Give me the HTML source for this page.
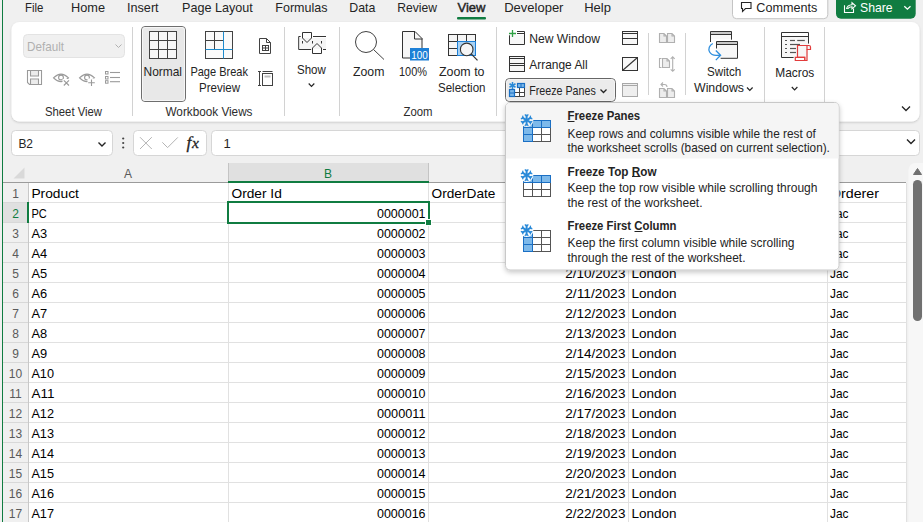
<!DOCTYPE html>
<html><head><meta charset="utf-8"><title>Excel - Freeze Panes</title>
<style>html,body{margin:0;padding:0;background:#f0f0f0;overflow:hidden;width:923px;height:522px}svg{display:block;font-family:"Liberation Sans",sans-serif}</style></head>
<body><svg width="923" height="522" viewBox="0 0 923 522" font-family="Liberation Sans, sans-serif" shape-rendering="auto"><rect x="0" y="0" width="923" height="522" fill="#f0f0f0" />
<text x="25" y="12" font-size="13" fill="#242424" textLength="18.4" lengthAdjust="spacingAndGlyphs" >File</text>
<text x="71" y="12" font-size="13" fill="#242424" textLength="34" lengthAdjust="spacingAndGlyphs" >Home</text>
<text x="127" y="12" font-size="13" fill="#242424" textLength="31.6" lengthAdjust="spacingAndGlyphs" >Insert</text>
<text x="182" y="12" font-size="13" fill="#242424" textLength="70.8" lengthAdjust="spacingAndGlyphs" >Page Layout</text>
<text x="275.3" y="12" font-size="13" fill="#242424" textLength="52.1" lengthAdjust="spacingAndGlyphs" >Formulas</text>
<text x="349.3" y="12" font-size="13" fill="#242424" textLength="26.1" lengthAdjust="spacingAndGlyphs" >Data</text>
<text x="397.3" y="12" font-size="13" fill="#242424" textLength="39.7" lengthAdjust="spacingAndGlyphs" >Review</text>
<text x="457.5" y="12" font-size="13" fill="#242424" stroke="#242424" stroke-width="0.45">View</text>
<text x="504.2" y="12" font-size="13" fill="#242424" >Developer</text>
<text x="584.2" y="12" font-size="13" fill="#242424" >Help</text>
<rect x="457" y="17" width="29" height="2.5" fill="#107c41" rx="1" />
<rect x="732.5" y="-6" width="95.3" height="24.7" fill="#ffffff" stroke="#c4c4c4" stroke-width="1" rx="4" />
<path d="M741.5 2.5 h9.5 v6 h-5.5 l-3 3 v-3 h-1 z" fill="none" stroke="#242424" stroke-width="1.1" />
<text x="756.3" y="12" font-size="13" fill="#242424" textLength="61" lengthAdjust="spacingAndGlyphs" >Comments</text>
<rect x="836" y="-6" width="79.7" height="24.8" fill="#107c41" rx="5" />
<path d="M844.5 5.2 v7.3 h9 v-4" fill="none" stroke="#ffffff" stroke-width="1.1" />
<path d="M846.5 9 c0.5-2.5 2.5-4 5.5-4.2 v-2 l3.5 3 -3.5 3 v-2 c-2 0-3.5 0.8-4.5 2.2" fill="none" stroke="#ffffff" stroke-width="1.1" />
<text x="860" y="12" font-size="13" fill="#ffffff" textLength="32.6" lengthAdjust="spacingAndGlyphs" >Share</text>
<path d="M904.3 6.2 l3.1 3 3.1-3" fill="none" stroke="#ffffff" stroke-width="1.3" />
<defs><filter id="sh" x="-5%" y="-20%" width="110%" height="150%"><feDropShadow dx="0" dy="1" stdDeviation="1" flood-color="#000" flood-opacity="0.18"/></filter><filter id="sh2" x="-10%" y="-10%" width="120%" height="125%"><feDropShadow dx="0" dy="2" stdDeviation="2.5" flood-color="#000" flood-opacity="0.22"/></filter></defs>
<rect x="11.5" y="22" width="908" height="99.5" fill="#ffffff" rx="8" filter="url(#sh)"/>
<line x1="132.5" y1="27" x2="132.5" y2="116" stroke="#d2d2d2" stroke-width="1" />
<line x1="284.5" y1="27" x2="284.5" y2="116" stroke="#d2d2d2" stroke-width="1" />
<line x1="339.5" y1="27" x2="339.5" y2="116" stroke="#d2d2d2" stroke-width="1" />
<line x1="496.5" y1="27" x2="496.5" y2="116" stroke="#d2d2d2" stroke-width="1" />
<line x1="764.5" y1="27" x2="764.5" y2="116" stroke="#d2d2d2" stroke-width="1" />
<line x1="824.5" y1="27" x2="824.5" y2="116" stroke="#d2d2d2" stroke-width="1" />
<line x1="648.5" y1="33" x2="648.5" y2="95" stroke="#d2d2d2" stroke-width="1" />
<line x1="685.5" y1="33" x2="685.5" y2="95" stroke="#d2d2d2" stroke-width="1" />
<rect x="23.5" y="34.5" width="101" height="23" fill="#f0f0f0" stroke="#e3e3e3" stroke-width="1" rx="4" />
<text x="27" y="50.5" font-size="13" fill="#b0b0b0" textLength="37" lengthAdjust="spacingAndGlyphs" >Default</text>
<path d="M115.5 44.5 l3 3 3-3" fill="none" stroke="#b0b0b0" stroke-width="1" />
<path d="M27.5 70.5 h14 v14 h-12 l-2-2 z" fill="none" stroke="#9a9a9a" stroke-width="1.1" />
<rect x="31" y="71" width="7" height="5" fill="#ececec" />
<rect x="31" y="79.5" width="7" height="4.5" fill="#ececec" />
<path d="M30.5 70.5 v5.5 h8 v-5.5 M30.5 84.5 v-5.5 h8 v5.5" fill="none" stroke="#9a9a9a" stroke-width="1.1" />
<path d="M53.5 77.8 q7.5-7.5 15 0 q-7.5 7.5-15 0 z" fill="none" stroke="#9a9a9a" stroke-width="1.1" />
<circle cx="61" cy="77.5" r="2.4" fill="none" stroke="#9a9a9a" stroke-width="1.1"/>
<rect x="62.5" y="79" width="8" height="8" fill="#ffffff" />
<path d="M63.8 80.3 l5.2 5.2 M69 80.3 l-5.2 5.2" fill="none" stroke="#9a9a9a" stroke-width="1.1" />
<path d="M79.5 77.8 q7.5-7.5 15 0 q-7.5 7.5-15 0 z" fill="none" stroke="#9a9a9a" stroke-width="1.1" />
<circle cx="87" cy="77.5" r="2.4" fill="none" stroke="#9a9a9a" stroke-width="1.1"/>
<rect x="87.5" y="78.5" width="8" height="8" fill="#ffffff" />
<path d="M91.5 79.5 v6.5 M88.2 82.8 h6.6" fill="none" stroke="#9a9a9a" stroke-width="1.1" />
<rect x="105.5" y="71.5" width="2.5" height="2.5" fill="none" stroke="#9a9a9a" stroke-width="1" />
<line x1="110" y1="72.5" x2="120" y2="72.5" stroke="#9a9a9a" stroke-width="1.1" />
<rect x="105.5" y="76.5" width="2.5" height="2.5" fill="none" stroke="#9a9a9a" stroke-width="1" />
<line x1="110" y1="77.5" x2="120" y2="77.5" stroke="#9a9a9a" stroke-width="1.1" />
<rect x="105.5" y="80.7" width="2.5" height="2.5" fill="none" stroke="#9a9a9a" stroke-width="1" />
<line x1="110" y1="81.7" x2="120" y2="81.7" stroke="#9a9a9a" stroke-width="1.1" />
<text x="45" y="116" font-size="12" fill="#2c2c2c" textLength="57" lengthAdjust="spacingAndGlyphs" >Sheet View</text>
<rect x="141.5" y="26.5" width="44" height="75" fill="#e8e8e8" stroke="#6e6e6e" stroke-width="1" rx="3.5" />
<rect x="142.5" y="27.5" width="42" height="73" fill="none" stroke="#f6f6f6" stroke-width="1" rx="2.5" />
<rect x="149.5" y="31.5" width="27" height="27" fill="#f7f7f7" stroke="#424242" stroke-width="1" />
<line x1="158.5" y1="31.5" x2="158.5" y2="58.5" stroke="#424242" stroke-width="1" />
<line x1="149.5" y1="40.5" x2="176.5" y2="40.5" stroke="#424242" stroke-width="1" />
<line x1="167.5" y1="31.5" x2="167.5" y2="58.5" stroke="#424242" stroke-width="1" />
<line x1="149.5" y1="49.5" x2="176.5" y2="49.5" stroke="#424242" stroke-width="1" />
<text x="143.5" y="76" font-size="13" fill="#242424" textLength="38.5" lengthAdjust="spacingAndGlyphs" >Normal</text>
<rect x="205.5" y="31.5" width="27" height="27" fill="#fafafa" stroke="#424242" stroke-width="1" />
<line x1="214.5" y1="31.5" x2="214.5" y2="49.5" stroke="#424242" stroke-width="1" />
<line x1="205.5" y1="40.5" x2="223.5" y2="40.5" stroke="#424242" stroke-width="1" />
<line x1="223.5" y1="31.5" x2="223.5" y2="58.5" stroke="#1e8bcd" stroke-width="1" />
<line x1="205.5" y1="49.5" x2="232.5" y2="49.5" stroke="#1e8bcd" stroke-width="1" />
<text x="190.4" y="76" font-size="13" fill="#242424" textLength="57.6" lengthAdjust="spacingAndGlyphs" >Page Break</text>
<text x="199" y="91.5" font-size="13" fill="#242424" textLength="41" lengthAdjust="spacingAndGlyphs" >Preview</text>
<path d="M259.5 38.5 h7 l4 4 v11 h-11 z M266.5 38.5 v4 h4" fill="none" stroke="#424242" stroke-width="1" />
<rect x="262.5" y="45.5" width="6" height="5" fill="none" stroke="#424242" stroke-width="1" />
<line x1="265.5" y1="45.5" x2="265.5" y2="50.5" stroke="#424242" stroke-width="1" />
<line x1="262.5" y1="48" x2="268.5" y2="48" stroke="#424242" stroke-width="1" />
<path d="M258 71.5 h3 M259.5 71.5 v14 M258 85.5 h3" fill="none" stroke="#424242" stroke-width="1" />
<path d="M262.5 71.5 h10" fill="none" stroke="#424242" stroke-width="1" />
<rect x="262.5" y="73.5" width="10" height="12" fill="none" stroke="#424242" stroke-width="1" />
<rect x="264.5" y="75.5" width="6" height="2" fill="#bdbdbd" />
<text x="165.5" y="116" font-size="12" fill="#2c2c2c" textLength="87" lengthAdjust="spacingAndGlyphs" >Workbook Views</text>
<rect x="300" y="38" width="26" height="11" fill="#f5f5f5" />
<path d="M300.7 36.5 h-2 v13 h12.5 M313 36.5 h13 M323 49.5 h3 M302.5 32.5 h9 v5.5 l-4.5 4.5 -4.5-4.5 z M312.5 53.5 v-5.5 l4.5-4.5 4.5 4.5 v5.5 z" fill="none" stroke="#333333" stroke-width="1" />
<path d="M302.5 41 v2.5 M312.5 41 v2.5 M321.5 41 v2.5" fill="none" stroke="#333333" stroke-width="1" />
<text x="297" y="74.3" font-size="13" fill="#242424" textLength="28.8" lengthAdjust="spacingAndGlyphs" >Show</text>
<path d="M308.7 83.5 l2.8 2.8 2.8-2.8" fill="none" stroke="#242424" stroke-width="1.2" />
<circle cx="366" cy="42" r="10.5" fill="none" stroke="#424242" stroke-width="1"/>
<line x1="373.5" y1="49.5" x2="384" y2="59.5" stroke="#424242" stroke-width="1" />
<text x="353" y="76" font-size="13" fill="#242424" textLength="31.4" lengthAdjust="spacingAndGlyphs" >Zoom</text>
<path d="M402.5 31.5 h12.5 l7 7 v19.5 h-19.5 z" fill="#f7f7f7" stroke="#333333" stroke-width="1" />
<path d="M414.5 31.5 v7.5 h8" fill="none" stroke="#333333" stroke-width="1" />
<rect x="410" y="48" width="19" height="12.5" fill="#1c7fd6" />
<text x="419.5" y="58.6" font-size="10.5" fill="#ffffff" text-anchor="middle" textLength="16.5" lengthAdjust="spacingAndGlyphs" >100</text>
<rect x="448.5" y="34.5" width="27" height="21" fill="#f5f5f5" stroke="#333333" stroke-width="1" />
<rect x="457.5" y="41.5" width="18" height="14" fill="#a9d1f2" />
<line x1="448.5" y1="41.5" x2="475.5" y2="41.5" stroke="#333333" stroke-width="1" />
<line x1="448.5" y1="48.5" x2="457.5" y2="48.5" stroke="#333333" stroke-width="1" />
<line x1="457.5" y1="34.5" x2="457.5" y2="41.5" stroke="#333333" stroke-width="1" />
<line x1="466.5" y1="34.5" x2="466.5" y2="41.5" stroke="#333333" stroke-width="1" />
<rect x="457.5" y="41.5" width="18" height="14" fill="none" stroke="#1c7fd6" stroke-width="1" />
<circle cx="466.7" cy="49.4" r="6.3" fill="#f5f5f5" stroke="#333333" stroke-width="1.1"/>
<line x1="471.2" y1="53.9" x2="477.5" y2="60.3" stroke="#333333" stroke-width="1.2" />
<text x="399" y="76" font-size="13" fill="#242424" textLength="28" lengthAdjust="spacingAndGlyphs" >100%</text>
<text x="439" y="76" font-size="13" fill="#242424" textLength="45.5" lengthAdjust="spacingAndGlyphs" >Zoom to</text>
<text x="438" y="91.5" font-size="13" fill="#242424" textLength="47.5" lengthAdjust="spacingAndGlyphs" >Selection</text>
<text x="403.5" y="116" font-size="12" fill="#2c2c2c" textLength="29" lengthAdjust="spacingAndGlyphs" >Zoom</text>
<rect x="510" y="35" width="14" height="9" fill="#f7f7f7" />
<path d="M509.5 35.3 v9.2 h15 v-13 h-7.5 M517 33.5 h7.5" fill="none" stroke="#333333" stroke-width="1" />
<path d="M512.5 30 v7 M509 33.5 h7" fill="none" stroke="#2ea043" stroke-width="1.3" />
<text x="529.2" y="42.75" font-size="13" fill="#242424" textLength="70.8" lengthAdjust="spacingAndGlyphs" >New Window</text>
<rect x="509.5" y="56.5" width="15" height="15" fill="#f7f7f7" stroke="#333333" stroke-width="1" />
<line x1="509.5" y1="58.5" x2="524.5" y2="58.5" stroke="#333333" stroke-width="1" />
<line x1="509.5" y1="63.5" x2="524.5" y2="63.5" stroke="#333333" stroke-width="1" />
<line x1="509.5" y1="65.5" x2="524.5" y2="65.5" stroke="#333333" stroke-width="1" />
<text x="529.2" y="69" font-size="13" fill="#242424" textLength="58.5" lengthAdjust="spacingAndGlyphs" >Arrange All</text>
<rect x="505.5" y="78.5" width="110" height="23" fill="#ebebeb" stroke="#666666" stroke-width="1" rx="4" />
<rect x="506.5" y="79.5" width="108" height="21" fill="none" stroke="#f5f5f5" stroke-width="1" rx="3" />
<rect x="514.5" y="87.5" width="10" height="9" fill="#ffffff" />
<path d="M514.5 92.5 h10 M519.5 87.5 v9 M514.5 96.5 h10 v-9" fill="none" stroke="#444444" stroke-width="1" />
<rect x="517.5" y="83.5" width="7" height="4" fill="#7db9ea" stroke="#1a6fc4" stroke-width="1.2" />
<line x1="521" y1="83.5" x2="521" y2="87.5" stroke="#1a6fc4" stroke-width="1" />
<rect x="509.5" y="89.5" width="5" height="7" fill="#7db9ea" stroke="#1a6fc4" stroke-width="1.2" />
<line x1="509.5" y1="93" x2="514.5" y2="93" stroke="#1a6fc4" stroke-width="1" />
<line x1="512.5" y1="82" x2="512.5" y2="89" stroke="#2a8ad8" stroke-width="1.5" transform="rotate(0 512.5 85.5)"/>
<line x1="512.5" y1="82" x2="512.5" y2="89" stroke="#2a8ad8" stroke-width="1.5" transform="rotate(60 512.5 85.5)"/>
<line x1="512.5" y1="82" x2="512.5" y2="89" stroke="#2a8ad8" stroke-width="1.5" transform="rotate(120 512.5 85.5)"/>
<text x="529.2" y="94.75" font-size="13" fill="#242424" textLength="66.6" lengthAdjust="spacingAndGlyphs" >Freeze Panes</text>
<path d="M600.5 89.5 l3 3 3-3" fill="none" stroke="#242424" stroke-width="1.3" />
<rect x="622.5" y="31.5" width="15" height="13" fill="#f7f7f7" stroke="#333333" stroke-width="1" />
<line x1="622.5" y1="33.5" x2="637.5" y2="33.5" stroke="#333333" stroke-width="1" />
<line x1="622.5" y1="38.5" x2="637.5" y2="38.5" stroke="#333333" stroke-width="1" />
<rect x="622.5" y="57.5" width="15" height="13" fill="#f7f7f7" stroke="#333333" stroke-width="1" />
<line x1="622.5" y1="70.5" x2="637.5" y2="57.5" stroke="#333333" stroke-width="1.1" />
<rect x="622.5" y="83.5" width="15" height="13" fill="#efefef" stroke="#a8a8a8" stroke-width="1" />
<line x1="622.5" y1="85.5" x2="637.5" y2="85.5" stroke="#a8a8a8" stroke-width="1" />
<path d="M659.5 33.5 h4.5 l2.5 2.5 v6.5 h-7 z M664.0 33.5 v2.5 h2.5" fill="#ededed" stroke="#b0b0b0" stroke-width="1.1" />
<path d="M667.5 33.5 h4.5 l2.5 2.5 v6.5 h-7 z M672.0 33.5 v2.5 h2.5" fill="#ededed" stroke="#b0b0b0" stroke-width="1.1" />
<path d="M661.5 58.5 h-2 v9 h2" fill="none" stroke="#b0b0b0" stroke-width="1.1" />
<path d="M662.5 58.5 h4.5 l2.5 2.5 v6.5 h-7 z M667.0 58.5 v2.5 h2.5" fill="#ededed" stroke="#b0b0b0" stroke-width="1.1" />
<path d="M672.7 56.8 v14.5 M670.7 58.8 l2-2 2 2 M670.7 69.3 l2 2 2-2" fill="none" stroke="#b0b0b0" stroke-width="1.1" />
<path d="M659.5 88.5 h4.5 l2.5 2.5 v6.5 h-7 z M664.0 88.5 v2.5 h2.5" fill="#ededed" stroke="#b0b0b0" stroke-width="1.1" />
<path d="M667.5 88.5 h4.5 l2.5 2.5 v6.5 h-7 z M672.0 88.5 v2.5 h2.5" fill="#ededed" stroke="#b0b0b0" stroke-width="1.1" />
<path d="M661 84.5 h3.5 q2.5 0 2.5 2.5 M663 82.5 l-2 2 2 2" fill="none" stroke="#b0b0b0" stroke-width="1.1" />
<rect x="710.5" y="31.5" width="21" height="3" fill="#c8c8c8" />
<rect x="711" y="34.5" width="20" height="5" fill="#f7f7f7" />
<path d="M710.5 42 V31.5 H731.5 V39.7 M710.5 34.5 H731.5" fill="none" stroke="#333333" stroke-width="1" />
<rect x="716.5" y="41.5" width="21" height="3" fill="#c8c8c8" />
<rect x="717" y="44.5" width="20" height="13.5" fill="#f7f7f7" />
<path d="M716.5 48.5 V41.5 H737.5 V58.3 H720.6 M716.5 44.5 H737.5" fill="none" stroke="#333333" stroke-width="1" />
<path d="M712.8 43.5 c-3.5 1.8 -4.8 5.5 -3.2 8.5 c1.2 2.2 3.5 3.3 6.5 3.3 h4.5 M715.8 50.5 l4.8 4.8 -4.8 4.8" fill="none" stroke="#2f8fde" stroke-width="1.3" />
<text x="707" y="75.8" font-size="13" fill="#242424" textLength="34.3" lengthAdjust="spacingAndGlyphs" >Switch</text>
<text x="694" y="91.6" font-size="13" fill="#242424" textLength="50" lengthAdjust="spacingAndGlyphs" >Windows</text>
<path d="M747 87.5 l2.8 2.8 2.8-2.8" fill="none" stroke="#242424" stroke-width="1.2" />
<rect x="782" y="37" width="26" height="20.5" fill="#f7f7f7" />
<path d="M808.5 43.6 V32.5 H781.5 V57.5 H793.6 M781.5 36.5 H808.5" fill="none" stroke="#333333" stroke-width="1" />
<line x1="785" y1="40.5" x2="787" y2="40.5" stroke="#555555" stroke-width="1.2" />
<line x1="790" y1="40.5" x2="795" y2="40.5" stroke="#555555" stroke-width="1.2" />
<line x1="797.2" y1="40.5" x2="804.8" y2="40.5" stroke="#555555" stroke-width="1.2" />
<line x1="785" y1="44.5" x2="787" y2="44.5" stroke="#555555" stroke-width="1.2" />
<line x1="790" y1="44.5" x2="800" y2="44.5" stroke="#555555" stroke-width="1.2" />
<line x1="785" y1="48.5" x2="787" y2="48.5" stroke="#555555" stroke-width="1.2" />
<line x1="790" y1="48.5" x2="796" y2="48.5" stroke="#555555" stroke-width="1.2" />
<line x1="785" y1="52.5" x2="787" y2="52.5" stroke="#555555" stroke-width="1.2" />
<line x1="790" y1="52.5" x2="796" y2="52.5" stroke="#555555" stroke-width="1.2" />
<path d="M797.5 57.3 V45.5 H809 q1.5 0 1.5 1.5 v2.5 h-3.5 V60.5 h-2.3 V57.3 z" fill="#f7f7f7" stroke="#e23c3c" stroke-width="1.2" />
<path d="M795.3 57.3 h9.4 v3.2 h-9.4 z" fill="#ffffff" stroke="#e23c3c" stroke-width="1.2" />
<path d="M807 45.5 v4" fill="none" stroke="#e23c3c" stroke-width="1.2" />
<text x="775.3" y="77" font-size="13" fill="#242424" textLength="39" lengthAdjust="spacingAndGlyphs" >Macros</text>
<path d="M791.8 87 l2.8 2.8 2.8-2.8" fill="none" stroke="#242424" stroke-width="1.2" />
<path d="M902 106.5 l4 4 4-4" fill="none" stroke="#242424" stroke-width="1.3" />
<rect x="11.5" y="130.5" width="101" height="25" fill="#ffffff" stroke="#d6d6d6" stroke-width="1" rx="4" />
<text x="18.4" y="147.7" font-size="13" fill="#242424" textLength="14.6" lengthAdjust="spacingAndGlyphs" >B2</text>
<path d="M98.5 142.6 l3.5 3.5 3.5-3.5" fill="none" stroke="#242424" stroke-width="1.4" />
<circle cx="123.2" cy="138.5" r="1.1" fill="#424242"/>
<circle cx="123.2" cy="143" r="1.1" fill="#424242"/>
<circle cx="123.2" cy="147.5" r="1.1" fill="#424242"/>
<rect x="133.5" y="130.5" width="73" height="25" fill="#ffffff" stroke="#d6d6d6" stroke-width="1" rx="4" />
<path d="M140 137.2 l11.8 11.8 M151.8 137.2 l-11.8 11.8" fill="none" stroke="#b4b4b4" stroke-width="1" />
<path d="M162.3 142.3 l5.3 5.3 l10.2-10.2" fill="none" stroke="#b4b4b4" stroke-width="1" />
<text x="186.5" y="148.3" font-family="Liberation Serif" font-style="italic" font-size="17.5" fill="#242424" stroke="#242424" stroke-width="0.3">f<tspan font-size="15.5" dx="0.5">x</tspan></text>
<rect x="211.5" y="130.5" width="708" height="25" fill="#ffffff" stroke="#d6d6d6" stroke-width="1" rx="4" />
<text x="223.5" y="147.7" font-size="13" fill="#242424" >1</text>
<path d="M907 139.5 l4 4 4-4" fill="none" stroke="#242424" stroke-width="1.4" />
<rect x="3" y="163" width="903" height="19" fill="#f0f0f0" />
<rect x="28" y="183" width="878" height="339" fill="#ffffff" />
<rect x="228" y="163" width="200" height="19" fill="#e0e0e0" />
<rect x="3" y="203" width="25" height="19" fill="#e0e0e0" />
<line x1="228.5" y1="183" x2="228.5" y2="522" stroke="#e1e1e1" stroke-width="1" />
<line x1="428.5" y1="183" x2="428.5" y2="522" stroke="#e1e1e1" stroke-width="1" />
<line x1="628.5" y1="183" x2="628.5" y2="522" stroke="#e1e1e1" stroke-width="1" />
<line x1="827.5" y1="183" x2="827.5" y2="522" stroke="#e1e1e1" stroke-width="1" />
<line x1="906.5" y1="183" x2="906.5" y2="522" stroke="#e1e1e1" stroke-width="1" />
<line x1="228.5" y1="163" x2="228.5" y2="182" stroke="#c4c4c4" stroke-width="1" />
<line x1="428.5" y1="163" x2="428.5" y2="182" stroke="#c4c4c4" stroke-width="1" />
<line x1="28" y1="202.5" x2="906" y2="202.5" stroke="#e1e1e1" stroke-width="1" />
<line x1="3" y1="202.5" x2="28" y2="202.5" stroke="#d8d8d8" stroke-width="1" />
<line x1="28" y1="222.5" x2="906" y2="222.5" stroke="#e1e1e1" stroke-width="1" />
<line x1="3" y1="222.5" x2="28" y2="222.5" stroke="#d8d8d8" stroke-width="1" />
<line x1="28" y1="242.5" x2="906" y2="242.5" stroke="#e1e1e1" stroke-width="1" />
<line x1="3" y1="242.5" x2="28" y2="242.5" stroke="#d8d8d8" stroke-width="1" />
<line x1="28" y1="262.5" x2="906" y2="262.5" stroke="#e1e1e1" stroke-width="1" />
<line x1="3" y1="262.5" x2="28" y2="262.5" stroke="#d8d8d8" stroke-width="1" />
<line x1="28" y1="282.5" x2="906" y2="282.5" stroke="#e1e1e1" stroke-width="1" />
<line x1="3" y1="282.5" x2="28" y2="282.5" stroke="#d8d8d8" stroke-width="1" />
<line x1="28" y1="302.5" x2="906" y2="302.5" stroke="#e1e1e1" stroke-width="1" />
<line x1="3" y1="302.5" x2="28" y2="302.5" stroke="#d8d8d8" stroke-width="1" />
<line x1="28" y1="322.5" x2="906" y2="322.5" stroke="#e1e1e1" stroke-width="1" />
<line x1="3" y1="322.5" x2="28" y2="322.5" stroke="#d8d8d8" stroke-width="1" />
<line x1="28" y1="342.5" x2="906" y2="342.5" stroke="#e1e1e1" stroke-width="1" />
<line x1="3" y1="342.5" x2="28" y2="342.5" stroke="#d8d8d8" stroke-width="1" />
<line x1="28" y1="362.5" x2="906" y2="362.5" stroke="#e1e1e1" stroke-width="1" />
<line x1="3" y1="362.5" x2="28" y2="362.5" stroke="#d8d8d8" stroke-width="1" />
<line x1="28" y1="382.5" x2="906" y2="382.5" stroke="#e1e1e1" stroke-width="1" />
<line x1="3" y1="382.5" x2="28" y2="382.5" stroke="#d8d8d8" stroke-width="1" />
<line x1="28" y1="402.5" x2="906" y2="402.5" stroke="#e1e1e1" stroke-width="1" />
<line x1="3" y1="402.5" x2="28" y2="402.5" stroke="#d8d8d8" stroke-width="1" />
<line x1="28" y1="422.5" x2="906" y2="422.5" stroke="#e1e1e1" stroke-width="1" />
<line x1="3" y1="422.5" x2="28" y2="422.5" stroke="#d8d8d8" stroke-width="1" />
<line x1="28" y1="442.5" x2="906" y2="442.5" stroke="#e1e1e1" stroke-width="1" />
<line x1="3" y1="442.5" x2="28" y2="442.5" stroke="#d8d8d8" stroke-width="1" />
<line x1="28" y1="462.5" x2="906" y2="462.5" stroke="#e1e1e1" stroke-width="1" />
<line x1="3" y1="462.5" x2="28" y2="462.5" stroke="#d8d8d8" stroke-width="1" />
<line x1="28" y1="482.5" x2="906" y2="482.5" stroke="#e1e1e1" stroke-width="1" />
<line x1="3" y1="482.5" x2="28" y2="482.5" stroke="#d8d8d8" stroke-width="1" />
<line x1="28" y1="502.5" x2="906" y2="502.5" stroke="#e1e1e1" stroke-width="1" />
<line x1="3" y1="502.5" x2="28" y2="502.5" stroke="#d8d8d8" stroke-width="1" />
<line x1="3" y1="182.5" x2="906" y2="182.5" stroke="#9b9b9b" stroke-width="1" />
<line x1="28.5" y1="183" x2="28.5" y2="522" stroke="#c8c8c8" stroke-width="1" />
<rect x="228" y="181" width="201" height="2" fill="#107c41" />
<rect x="27" y="202" width="2" height="21" fill="#107c41" />
<path d="M24.5 167.5 v11 h-11 z" fill="#d9d9d9" stroke="none" stroke-width="1" />
<text x="15.5" y="197.5" font-size="12" fill="#5a5a5a" text-anchor="middle" >1</text>
<text x="15.5" y="217.5" font-size="12" fill="#107c41" text-anchor="middle" >2</text>
<text x="15.5" y="237.5" font-size="12" fill="#5a5a5a" text-anchor="middle" >3</text>
<text x="15.5" y="257.5" font-size="12" fill="#5a5a5a" text-anchor="middle" >4</text>
<text x="15.5" y="277.5" font-size="12" fill="#5a5a5a" text-anchor="middle" >5</text>
<text x="15.5" y="297.5" font-size="12" fill="#5a5a5a" text-anchor="middle" >6</text>
<text x="15.5" y="317.5" font-size="12" fill="#5a5a5a" text-anchor="middle" >7</text>
<text x="15.5" y="337.5" font-size="12" fill="#5a5a5a" text-anchor="middle" >8</text>
<text x="15.5" y="357.5" font-size="12" fill="#5a5a5a" text-anchor="middle" >9</text>
<text x="15.5" y="377.5" font-size="12" fill="#5a5a5a" text-anchor="middle" >10</text>
<text x="15.5" y="397.5" font-size="12" fill="#5a5a5a" text-anchor="middle" >11</text>
<text x="15.5" y="417.5" font-size="12" fill="#5a5a5a" text-anchor="middle" >12</text>
<text x="15.5" y="437.5" font-size="12" fill="#5a5a5a" text-anchor="middle" >13</text>
<text x="15.5" y="457.5" font-size="12" fill="#5a5a5a" text-anchor="middle" >14</text>
<text x="15.5" y="477.5" font-size="12" fill="#5a5a5a" text-anchor="middle" >15</text>
<text x="15.5" y="497.5" font-size="12" fill="#5a5a5a" text-anchor="middle" >16</text>
<text x="15.5" y="517.5" font-size="12" fill="#5a5a5a" text-anchor="middle" >17</text>
<text x="128" y="178" font-size="12" fill="#5a5a5a" text-anchor="middle" >A</text>
<text x="328" y="178" font-size="12" fill="#107c41" text-anchor="middle" >B</text>
<text x="31.4" y="197.9" font-size="13.5" fill="#000000" textLength="47.5" lengthAdjust="spacingAndGlyphs" >Product</text>
<text x="231.5" y="197.9" font-size="13.5" fill="#000000" textLength="50.3" lengthAdjust="spacingAndGlyphs" >Order Id</text>
<text x="431.6" y="197.9" font-size="13.5" fill="#000000" textLength="63.8" lengthAdjust="spacingAndGlyphs" >OrderDate</text>
<text x="830" y="197.9" font-size="13.5" fill="#000000" textLength="49" lengthAdjust="spacingAndGlyphs" >Orderer</text>
<text x="31.4" y="217.9" font-size="13.5" fill="#000000" textLength="15.3" lengthAdjust="spacingAndGlyphs" >PC</text>
<text x="425.5" y="217.9" font-size="13.5" fill="#000000" text-anchor="end" textLength="48.5" lengthAdjust="spacingAndGlyphs" >0000001</text>
<text x="625.4" y="217.9" font-size="13.5" fill="#000000" text-anchor="end" textLength="53.2" lengthAdjust="spacingAndGlyphs" >2/7/2023</text>
<text x="631.5" y="217.9" font-size="13.5" fill="#000000" >London</text>
<text x="830" y="217.9" font-size="13.5" fill="#000000" textLength="18.5" lengthAdjust="spacingAndGlyphs" >Jac</text>
<text x="31.4" y="237.9" font-size="13.5" fill="#000000" textLength="15.700000000000001" lengthAdjust="spacingAndGlyphs" >A3</text>
<text x="425.5" y="237.9" font-size="13.5" fill="#000000" text-anchor="end" textLength="48.5" lengthAdjust="spacingAndGlyphs" >0000002</text>
<text x="625.4" y="237.9" font-size="13.5" fill="#000000" text-anchor="end" textLength="53.2" lengthAdjust="spacingAndGlyphs" >2/8/2023</text>
<text x="631.5" y="237.9" font-size="13.5" fill="#000000" >London</text>
<text x="830" y="237.9" font-size="13.5" fill="#000000" textLength="18.5" lengthAdjust="spacingAndGlyphs" >Jac</text>
<text x="31.4" y="257.9" font-size="13.5" fill="#000000" textLength="15.700000000000001" lengthAdjust="spacingAndGlyphs" >A4</text>
<text x="425.5" y="257.9" font-size="13.5" fill="#000000" text-anchor="end" textLength="48.5" lengthAdjust="spacingAndGlyphs" >0000003</text>
<text x="625.4" y="257.9" font-size="13.5" fill="#000000" text-anchor="end" textLength="53.2" lengthAdjust="spacingAndGlyphs" >2/9/2023</text>
<text x="631.5" y="257.9" font-size="13.5" fill="#000000" >London</text>
<text x="830" y="257.9" font-size="13.5" fill="#000000" textLength="18.5" lengthAdjust="spacingAndGlyphs" >Jac</text>
<text x="31.4" y="277.9" font-size="13.5" fill="#000000" textLength="15.700000000000001" lengthAdjust="spacingAndGlyphs" >A5</text>
<text x="425.5" y="277.9" font-size="13.5" fill="#000000" text-anchor="end" textLength="48.5" lengthAdjust="spacingAndGlyphs" >0000004</text>
<text x="625.4" y="277.9" font-size="13.5" fill="#000000" text-anchor="end" >2/10/2023</text>
<text x="631.5" y="277.9" font-size="13.5" fill="#000000" >London</text>
<text x="830" y="277.9" font-size="13.5" fill="#000000" textLength="18.5" lengthAdjust="spacingAndGlyphs" >Jac</text>
<text x="31.4" y="297.9" font-size="13.5" fill="#000000" textLength="15.700000000000001" lengthAdjust="spacingAndGlyphs" >A6</text>
<text x="425.5" y="297.9" font-size="13.5" fill="#000000" text-anchor="end" textLength="48.5" lengthAdjust="spacingAndGlyphs" >0000005</text>
<text x="625.4" y="297.9" font-size="13.5" fill="#000000" text-anchor="end" textLength="60.2" lengthAdjust="spacingAndGlyphs" >2/11/2023</text>
<text x="631.5" y="297.9" font-size="13.5" fill="#000000" >London</text>
<text x="830" y="297.9" font-size="13.5" fill="#000000" textLength="18.5" lengthAdjust="spacingAndGlyphs" >Jac</text>
<text x="31.4" y="317.9" font-size="13.5" fill="#000000" textLength="15.700000000000001" lengthAdjust="spacingAndGlyphs" >A7</text>
<text x="425.5" y="317.9" font-size="13.5" fill="#000000" text-anchor="end" textLength="48.5" lengthAdjust="spacingAndGlyphs" >0000006</text>
<text x="625.4" y="317.9" font-size="13.5" fill="#000000" text-anchor="end" >2/12/2023</text>
<text x="631.5" y="317.9" font-size="13.5" fill="#000000" >London</text>
<text x="830" y="317.9" font-size="13.5" fill="#000000" textLength="18.5" lengthAdjust="spacingAndGlyphs" >Jac</text>
<text x="31.4" y="337.9" font-size="13.5" fill="#000000" textLength="15.700000000000001" lengthAdjust="spacingAndGlyphs" >A8</text>
<text x="425.5" y="337.9" font-size="13.5" fill="#000000" text-anchor="end" textLength="48.5" lengthAdjust="spacingAndGlyphs" >0000007</text>
<text x="625.4" y="337.9" font-size="13.5" fill="#000000" text-anchor="end" >2/13/2023</text>
<text x="631.5" y="337.9" font-size="13.5" fill="#000000" >London</text>
<text x="830" y="337.9" font-size="13.5" fill="#000000" textLength="18.5" lengthAdjust="spacingAndGlyphs" >Jac</text>
<text x="31.4" y="357.9" font-size="13.5" fill="#000000" textLength="15.700000000000001" lengthAdjust="spacingAndGlyphs" >A9</text>
<text x="425.5" y="357.9" font-size="13.5" fill="#000000" text-anchor="end" textLength="48.5" lengthAdjust="spacingAndGlyphs" >0000008</text>
<text x="625.4" y="357.9" font-size="13.5" fill="#000000" text-anchor="end" >2/14/2023</text>
<text x="631.5" y="357.9" font-size="13.5" fill="#000000" >London</text>
<text x="830" y="357.9" font-size="13.5" fill="#000000" textLength="18.5" lengthAdjust="spacingAndGlyphs" >Jac</text>
<text x="31.4" y="377.9" font-size="13.5" fill="#000000" textLength="22.6" lengthAdjust="spacingAndGlyphs" >A10</text>
<text x="425.5" y="377.9" font-size="13.5" fill="#000000" text-anchor="end" textLength="48.5" lengthAdjust="spacingAndGlyphs" >0000009</text>
<text x="625.4" y="377.9" font-size="13.5" fill="#000000" text-anchor="end" >2/15/2023</text>
<text x="631.5" y="377.9" font-size="13.5" fill="#000000" >London</text>
<text x="830" y="377.9" font-size="13.5" fill="#000000" textLength="18.5" lengthAdjust="spacingAndGlyphs" >Jac</text>
<text x="31.4" y="397.9" font-size="13.5" fill="#000000" >A11</text>
<text x="425.5" y="397.9" font-size="13.5" fill="#000000" text-anchor="end" textLength="48.5" lengthAdjust="spacingAndGlyphs" >0000010</text>
<text x="625.4" y="397.9" font-size="13.5" fill="#000000" text-anchor="end" >2/16/2023</text>
<text x="631.5" y="397.9" font-size="13.5" fill="#000000" >London</text>
<text x="830" y="397.9" font-size="13.5" fill="#000000" textLength="18.5" lengthAdjust="spacingAndGlyphs" >Jac</text>
<text x="31.4" y="417.9" font-size="13.5" fill="#000000" textLength="22.6" lengthAdjust="spacingAndGlyphs" >A12</text>
<text x="425.5" y="417.9" font-size="13.5" fill="#000000" text-anchor="end" textLength="48.5" lengthAdjust="spacingAndGlyphs" >0000011</text>
<text x="625.4" y="417.9" font-size="13.5" fill="#000000" text-anchor="end" >2/17/2023</text>
<text x="631.5" y="417.9" font-size="13.5" fill="#000000" >London</text>
<text x="830" y="417.9" font-size="13.5" fill="#000000" textLength="18.5" lengthAdjust="spacingAndGlyphs" >Jac</text>
<text x="31.4" y="437.9" font-size="13.5" fill="#000000" textLength="22.6" lengthAdjust="spacingAndGlyphs" >A13</text>
<text x="425.5" y="437.9" font-size="13.5" fill="#000000" text-anchor="end" textLength="48.5" lengthAdjust="spacingAndGlyphs" >0000012</text>
<text x="625.4" y="437.9" font-size="13.5" fill="#000000" text-anchor="end" >2/18/2023</text>
<text x="631.5" y="437.9" font-size="13.5" fill="#000000" >London</text>
<text x="830" y="437.9" font-size="13.5" fill="#000000" textLength="18.5" lengthAdjust="spacingAndGlyphs" >Jac</text>
<text x="31.4" y="457.9" font-size="13.5" fill="#000000" textLength="22.6" lengthAdjust="spacingAndGlyphs" >A14</text>
<text x="425.5" y="457.9" font-size="13.5" fill="#000000" text-anchor="end" textLength="48.5" lengthAdjust="spacingAndGlyphs" >0000013</text>
<text x="625.4" y="457.9" font-size="13.5" fill="#000000" text-anchor="end" >2/19/2023</text>
<text x="631.5" y="457.9" font-size="13.5" fill="#000000" >London</text>
<text x="830" y="457.9" font-size="13.5" fill="#000000" textLength="18.5" lengthAdjust="spacingAndGlyphs" >Jac</text>
<text x="31.4" y="477.9" font-size="13.5" fill="#000000" textLength="22.6" lengthAdjust="spacingAndGlyphs" >A15</text>
<text x="425.5" y="477.9" font-size="13.5" fill="#000000" text-anchor="end" textLength="48.5" lengthAdjust="spacingAndGlyphs" >0000014</text>
<text x="625.4" y="477.9" font-size="13.5" fill="#000000" text-anchor="end" >2/20/2023</text>
<text x="631.5" y="477.9" font-size="13.5" fill="#000000" >London</text>
<text x="830" y="477.9" font-size="13.5" fill="#000000" textLength="18.5" lengthAdjust="spacingAndGlyphs" >Jac</text>
<text x="31.4" y="497.9" font-size="13.5" fill="#000000" textLength="22.6" lengthAdjust="spacingAndGlyphs" >A16</text>
<text x="425.5" y="497.9" font-size="13.5" fill="#000000" text-anchor="end" textLength="48.5" lengthAdjust="spacingAndGlyphs" >0000015</text>
<text x="625.4" y="497.9" font-size="13.5" fill="#000000" text-anchor="end" >2/21/2023</text>
<text x="631.5" y="497.9" font-size="13.5" fill="#000000" >London</text>
<text x="830" y="497.9" font-size="13.5" fill="#000000" textLength="18.5" lengthAdjust="spacingAndGlyphs" >Jac</text>
<text x="31.4" y="517.9" font-size="13.5" fill="#000000" textLength="22.6" lengthAdjust="spacingAndGlyphs" >A17</text>
<text x="425.5" y="517.9" font-size="13.5" fill="#000000" text-anchor="end" textLength="48.5" lengthAdjust="spacingAndGlyphs" >0000016</text>
<text x="625.4" y="517.9" font-size="13.5" fill="#000000" text-anchor="end" >2/22/2023</text>
<text x="631.5" y="517.9" font-size="13.5" fill="#000000" >London</text>
<text x="830" y="517.9" font-size="13.5" fill="#000000" textLength="18.5" lengthAdjust="spacingAndGlyphs" >Jac</text>
<rect x="228" y="202" width="201" height="21" fill="none" stroke="#107c41" stroke-width="2" />
<rect x="425" y="219" width="7" height="7" fill="#ffffff" />
<rect x="426" y="220" width="5" height="5" fill="#107c41" />
<rect x="908.5" y="163" width="24" height="380" fill="#f7f7f7" rx="7" />
<path d="M913.5 174.5 l4-6 4 6 z" fill="#707070" stroke="#707070" stroke-width="1" stroke-linejoin="round"/>
<rect x="913" y="180" width="9" height="141" fill="#707070" rx="4.5" />
<rect x="2" y="0" width="1" height="522" fill="#107c41" />
<rect x="505.5" y="102.5" width="333.5" height="167.5" fill="#ffffff" stroke="#c8c8c8" stroke-width="1" rx="4.5" filter="url(#sh2)"/>
<path d="M506 158.5 V107 q0-4 4-4 H834.5 q4 0 4 4 V158.5 z" fill="#f5f5f5" stroke="none" stroke-width="1" />
<rect x="523.5" y="120.5" width="27" height="21" fill="#ffffff" />
<rect x="523.5" y="120.5" width="9" height="7" fill="#7db9ea" />
<rect x="532.5" y="120.5" width="9" height="7" fill="#7db9ea" />
<rect x="541.5" y="120.5" width="9" height="7" fill="#7db9ea" />
<rect x="523.5" y="127.5" width="9" height="7" fill="#7db9ea" />
<rect x="523.5" y="134.5" width="9" height="7" fill="#7db9ea" />
<rect x="523.5" y="120.5" width="27" height="21" fill="none" stroke="#555555" stroke-width="1" />
<line x1="532.5" y1="120.5" x2="532.5" y2="141.5" stroke="#555555" stroke-width="1" />
<line x1="523.5" y1="127.5" x2="550.5" y2="127.5" stroke="#555555" stroke-width="1" />
<line x1="541.5" y1="120.5" x2="541.5" y2="141.5" stroke="#555555" stroke-width="1" />
<line x1="523.5" y1="134.5" x2="550.5" y2="134.5" stroke="#555555" stroke-width="1" />
<rect x="523.5" y="120.5" width="9" height="7" fill="none" stroke="#1a6fc4" stroke-width="1" />
<rect x="532.5" y="120.5" width="9" height="7" fill="none" stroke="#1a6fc4" stroke-width="1" />
<rect x="541.5" y="120.5" width="9" height="7" fill="none" stroke="#1a6fc4" stroke-width="1" />
<rect x="523.5" y="127.5" width="9" height="7" fill="none" stroke="#1a6fc4" stroke-width="1" />
<rect x="523.5" y="134.5" width="9" height="7" fill="none" stroke="#1a6fc4" stroke-width="1" />
<circle cx="526.6" cy="120.1" r="6.8" fill="#f5f5f5"/>
<g transform="rotate(0 526.6 120.1)"><line x1="526.6" y1="114.6" x2="526.6" y2="125.6" stroke="#2a8ad8" stroke-width="2"/><path d="M524.8000000000001 114.5 l1.8 1.6 1.8-1.6 M524.8000000000001 125.69999999999999 l1.8-1.6 1.8 1.6" fill="none" stroke="#2a8ad8" stroke-width="1.2"/></g>
<g transform="rotate(60 526.6 120.1)"><line x1="526.6" y1="114.6" x2="526.6" y2="125.6" stroke="#2a8ad8" stroke-width="2"/><path d="M524.8000000000001 114.5 l1.8 1.6 1.8-1.6 M524.8000000000001 125.69999999999999 l1.8-1.6 1.8 1.6" fill="none" stroke="#2a8ad8" stroke-width="1.2"/></g>
<g transform="rotate(120 526.6 120.1)"><line x1="526.6" y1="114.6" x2="526.6" y2="125.6" stroke="#2a8ad8" stroke-width="2"/><path d="M524.8000000000001 114.5 l1.8 1.6 1.8-1.6 M524.8000000000001 125.69999999999999 l1.8-1.6 1.8 1.6" fill="none" stroke="#2a8ad8" stroke-width="1.2"/></g>
<rect x="523.5" y="175.5" width="27" height="21" fill="#ffffff" />
<rect x="523.5" y="175.5" width="9" height="7" fill="#7db9ea" />
<rect x="532.5" y="175.5" width="9" height="7" fill="#7db9ea" />
<rect x="541.5" y="175.5" width="9" height="7" fill="#7db9ea" />
<rect x="523.5" y="175.5" width="27" height="21" fill="none" stroke="#555555" stroke-width="1" />
<line x1="532.5" y1="175.5" x2="532.5" y2="196.5" stroke="#555555" stroke-width="1" />
<line x1="523.5" y1="182.5" x2="550.5" y2="182.5" stroke="#555555" stroke-width="1" />
<line x1="541.5" y1="175.5" x2="541.5" y2="196.5" stroke="#555555" stroke-width="1" />
<line x1="523.5" y1="189.5" x2="550.5" y2="189.5" stroke="#555555" stroke-width="1" />
<rect x="523.5" y="175.5" width="9" height="7" fill="none" stroke="#1a6fc4" stroke-width="1" />
<rect x="532.5" y="175.5" width="9" height="7" fill="none" stroke="#1a6fc4" stroke-width="1" />
<rect x="541.5" y="175.5" width="9" height="7" fill="none" stroke="#1a6fc4" stroke-width="1" />
<circle cx="526.6" cy="175.1" r="6.8" fill="#ffffff"/>
<g transform="rotate(0 526.6 175.1)"><line x1="526.6" y1="169.6" x2="526.6" y2="180.6" stroke="#2a8ad8" stroke-width="2"/><path d="M524.8000000000001 169.5 l1.8 1.6 1.8-1.6 M524.8000000000001 180.7 l1.8-1.6 1.8 1.6" fill="none" stroke="#2a8ad8" stroke-width="1.2"/></g>
<g transform="rotate(60 526.6 175.1)"><line x1="526.6" y1="169.6" x2="526.6" y2="180.6" stroke="#2a8ad8" stroke-width="2"/><path d="M524.8000000000001 169.5 l1.8 1.6 1.8-1.6 M524.8000000000001 180.7 l1.8-1.6 1.8 1.6" fill="none" stroke="#2a8ad8" stroke-width="1.2"/></g>
<g transform="rotate(120 526.6 175.1)"><line x1="526.6" y1="169.6" x2="526.6" y2="180.6" stroke="#2a8ad8" stroke-width="2"/><path d="M524.8000000000001 169.5 l1.8 1.6 1.8-1.6 M524.8000000000001 180.7 l1.8-1.6 1.8 1.6" fill="none" stroke="#2a8ad8" stroke-width="1.2"/></g>
<rect x="523.5" y="230.5" width="27" height="21" fill="#ffffff" />
<rect x="523.5" y="230.5" width="9" height="7" fill="#7db9ea" />
<rect x="523.5" y="237.5" width="9" height="7" fill="#7db9ea" />
<rect x="523.5" y="244.5" width="9" height="7" fill="#7db9ea" />
<rect x="523.5" y="230.5" width="27" height="21" fill="none" stroke="#555555" stroke-width="1" />
<line x1="532.5" y1="230.5" x2="532.5" y2="251.5" stroke="#555555" stroke-width="1" />
<line x1="523.5" y1="237.5" x2="550.5" y2="237.5" stroke="#555555" stroke-width="1" />
<line x1="541.5" y1="230.5" x2="541.5" y2="251.5" stroke="#555555" stroke-width="1" />
<line x1="523.5" y1="244.5" x2="550.5" y2="244.5" stroke="#555555" stroke-width="1" />
<rect x="523.5" y="230.5" width="9" height="7" fill="none" stroke="#1a6fc4" stroke-width="1" />
<rect x="523.5" y="237.5" width="9" height="7" fill="none" stroke="#1a6fc4" stroke-width="1" />
<rect x="523.5" y="244.5" width="9" height="7" fill="none" stroke="#1a6fc4" stroke-width="1" />
<circle cx="526.6" cy="230.1" r="6.8" fill="#ffffff"/>
<g transform="rotate(0 526.6 230.1)"><line x1="526.6" y1="224.6" x2="526.6" y2="235.6" stroke="#2a8ad8" stroke-width="2"/><path d="M524.8000000000001 224.5 l1.8 1.6 1.8-1.6 M524.8000000000001 235.7 l1.8-1.6 1.8 1.6" fill="none" stroke="#2a8ad8" stroke-width="1.2"/></g>
<g transform="rotate(60 526.6 230.1)"><line x1="526.6" y1="224.6" x2="526.6" y2="235.6" stroke="#2a8ad8" stroke-width="2"/><path d="M524.8000000000001 224.5 l1.8 1.6 1.8-1.6 M524.8000000000001 235.7 l1.8-1.6 1.8 1.6" fill="none" stroke="#2a8ad8" stroke-width="1.2"/></g>
<g transform="rotate(120 526.6 230.1)"><line x1="526.6" y1="224.6" x2="526.6" y2="235.6" stroke="#2a8ad8" stroke-width="2"/><path d="M524.8000000000001 224.5 l1.8 1.6 1.8-1.6 M524.8000000000001 235.7 l1.8-1.6 1.8 1.6" fill="none" stroke="#2a8ad8" stroke-width="1.2"/></g>
<text x="567.5" y="120.4" font-size="13" font-weight="bold" fill="#242424" textLength="72.6" lengthAdjust="spacingAndGlyphs" >Freeze Panes</text>
<text x="567.5" y="137.5" font-size="13" fill="#242424" textLength="248.4" lengthAdjust="spacingAndGlyphs" >Keep rows and columns visible while the rest of</text>
<text x="567.5" y="152" font-size="13" fill="#242424" textLength="262.4" lengthAdjust="spacingAndGlyphs" >the worksheet scrolls (based on current selection).</text>
<text x="567.5" y="175.6" font-size="13" font-weight="bold" fill="#242424" textLength="89" lengthAdjust="spacingAndGlyphs" >Freeze Top Row</text>
<rect x="567.5" y="121" width="7.0" height="1" fill="#242424" />
<rect x="632.0" y="176" width="8.5" height="1" fill="#242424" />
<text x="567.5" y="192.4" font-size="13" fill="#242424" textLength="250" lengthAdjust="spacingAndGlyphs" >Keep the top row visible while scrolling through</text>
<text x="567.5" y="206.8" font-size="13" fill="#242424" textLength="135" lengthAdjust="spacingAndGlyphs" >the rest of the worksheet.</text>
<text x="567.5" y="230.1" font-size="13" font-weight="bold" fill="#242424" textLength="109" lengthAdjust="spacingAndGlyphs" >Freeze First Column</text>
<rect x="634.5" y="231" width="8.0" height="1" fill="#242424" />
<text x="567.5" y="247.1" font-size="13" fill="#242424" textLength="227" lengthAdjust="spacingAndGlyphs" >Keep the first column visible while scrolling</text>
<text x="567.5" y="261.8" font-size="13" fill="#242424" textLength="178" lengthAdjust="spacingAndGlyphs" >through the rest of the worksheet.</text></svg></body></html>
